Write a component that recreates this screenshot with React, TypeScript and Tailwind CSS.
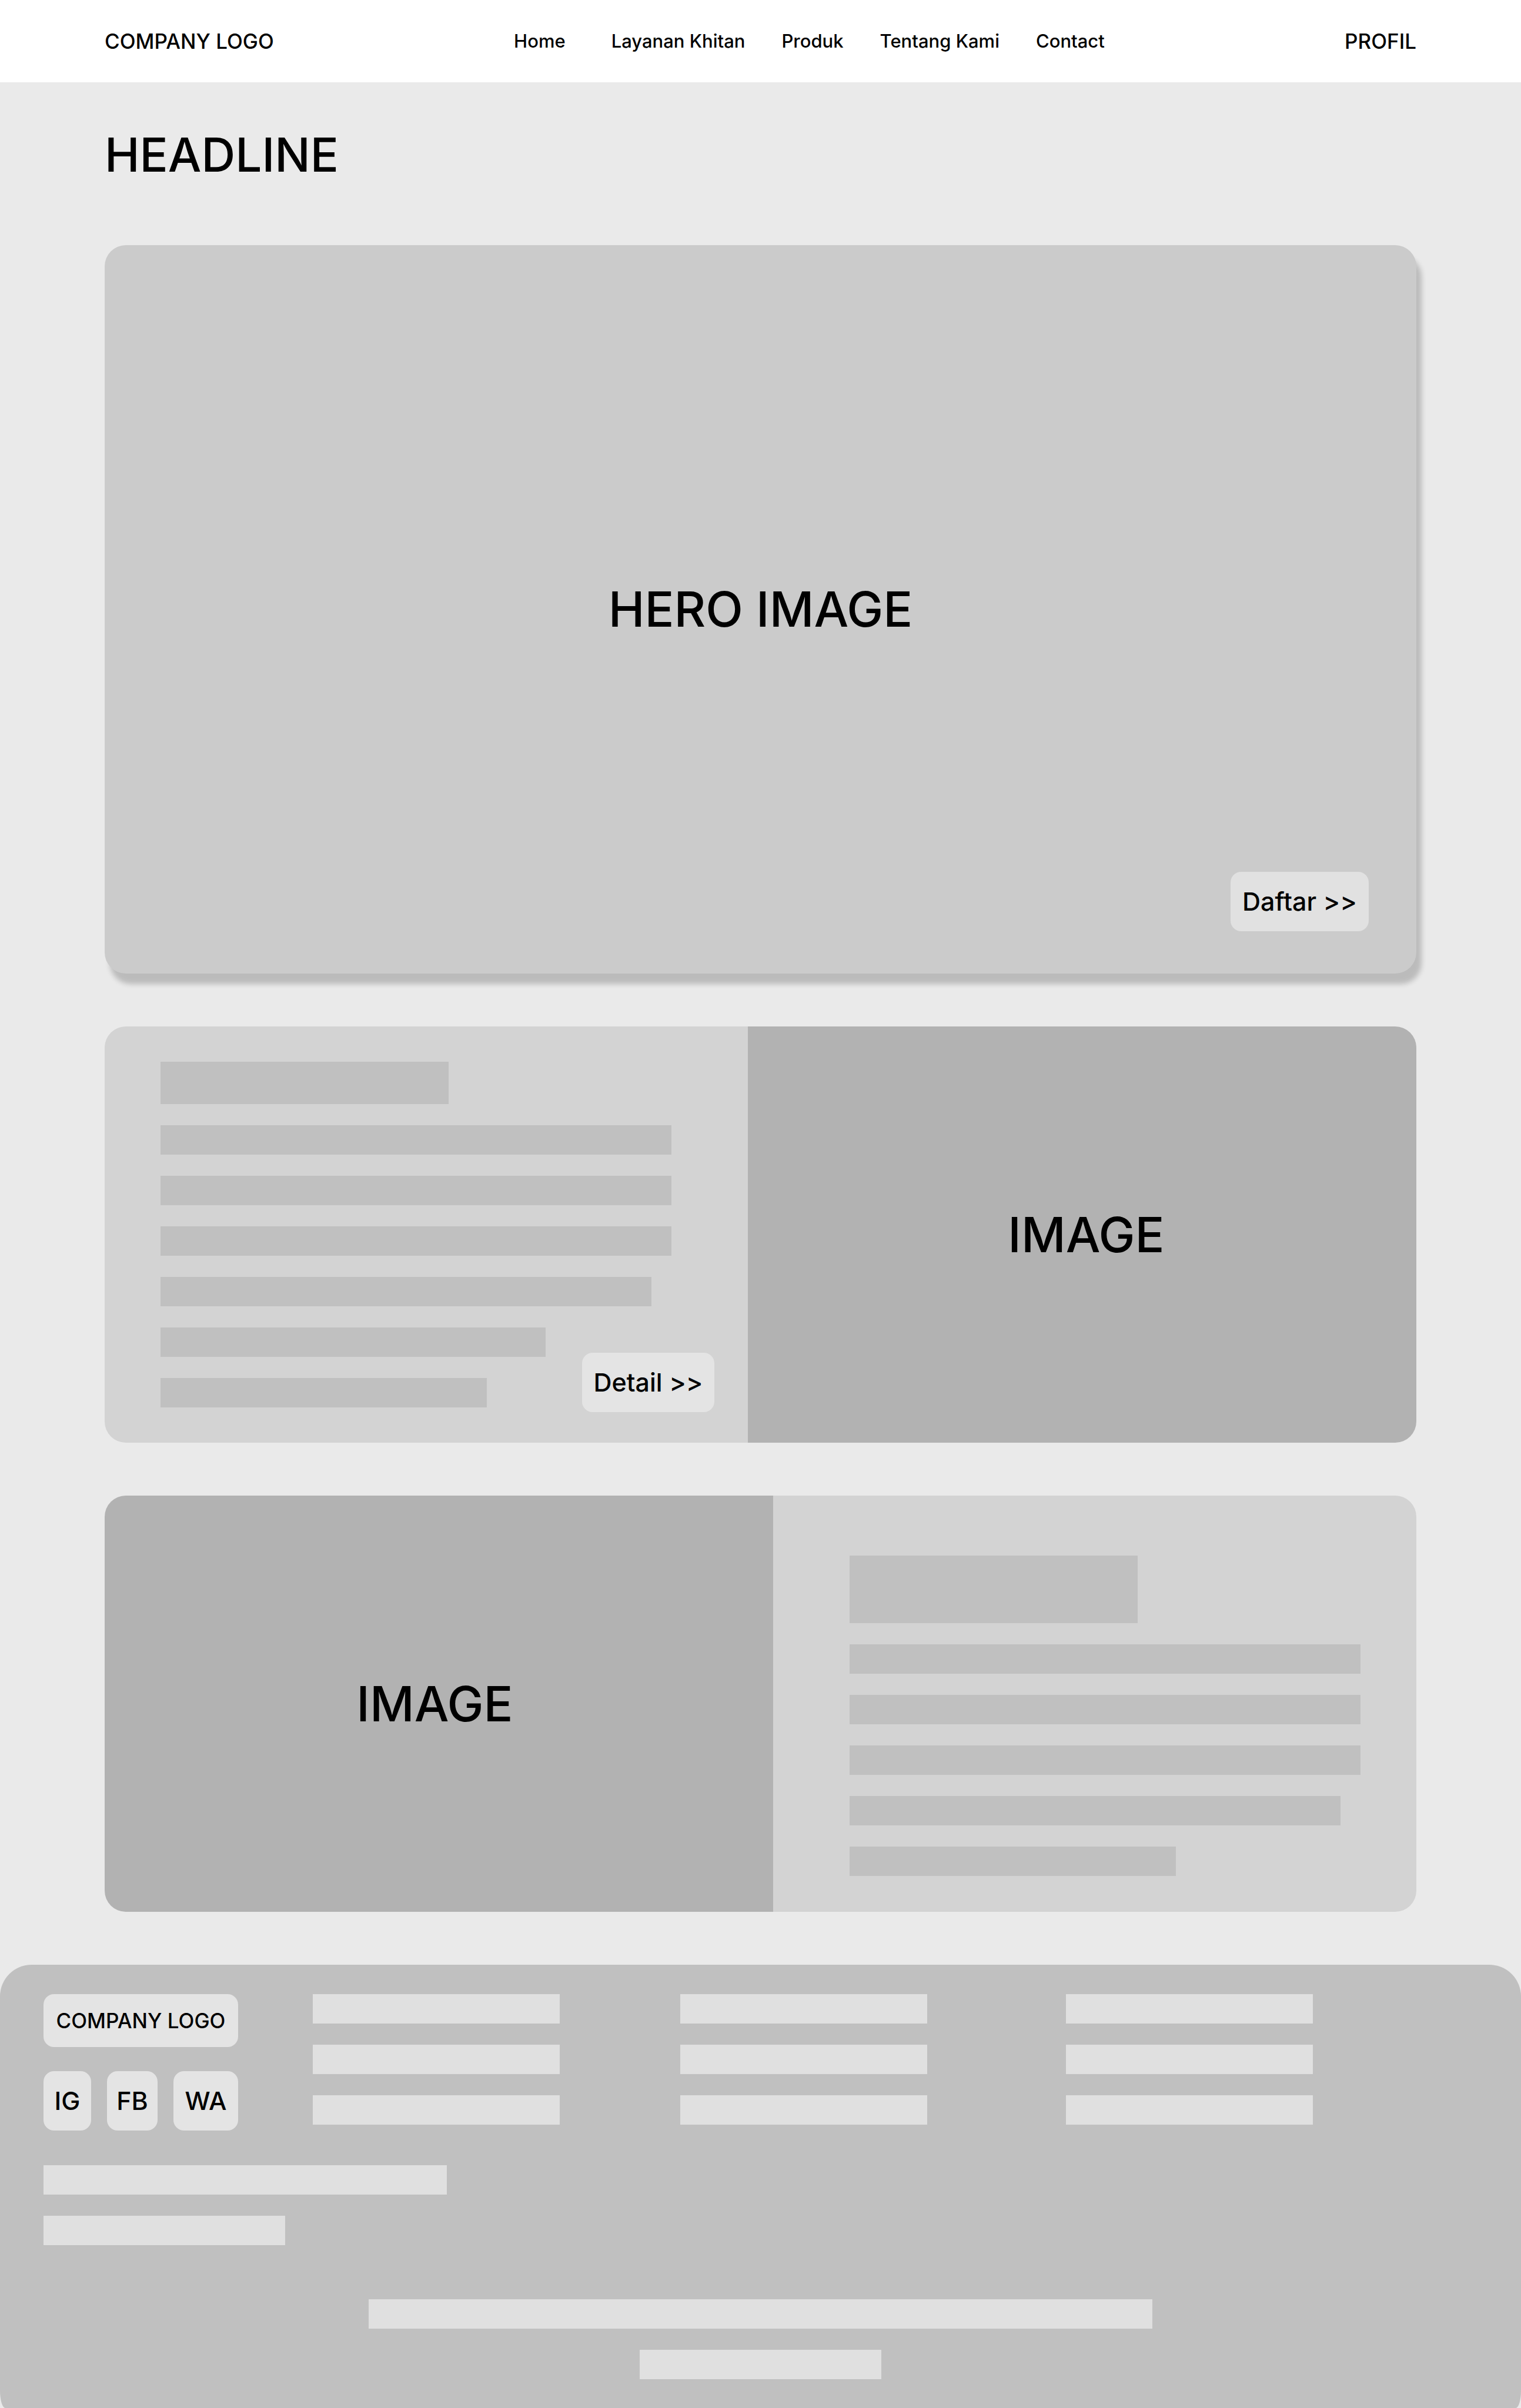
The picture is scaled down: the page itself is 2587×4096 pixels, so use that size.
const navLinks = [
  { label: "Home", className: "pr-4" },
  { label: "Layanan Khitan", className: "" },
  { label: "Produk", className: "" },
  { label: "Tentang Kami", className: "" },
  { label: "Contact", className: "" },
];

const detailLines = [
  "w-[869px]",
  "w-[869px]",
  "w-[869px]",
  "w-[835px]",
  "w-[655px]",
  "w-[555px]",
];

const summaryLines = [
  "w-[869px]",
  "w-[869px]",
  "w-[869px]",
  "w-[835px]",
  "w-[555px]",
];

const socials = ["IG", "FB", "WA"];

function Line({ width }: { width: string }) {
  return <div className={`h-[50px] max-w-full bg-[#c0c0c0] ${width}`} />;
}

function FooterLine({ width }: { width: string }) {
  return <div className={`h-[50px] max-w-full bg-[#e0e0e0] ${width}`} />;
}

function Header() {
  return (
    <header className="flex h-[140px] items-center justify-between bg-white px-[178px]">
      <a href="#" className="text-[35px]">
        COMPANY LOGO
      </a>
      <nav className="flex gap-[62px] text-[31px]">
        {navLinks.map((link) => (
          <a key={link.label} href="#" className={link.className}>
            {link.label}
          </a>
        ))}
      </nav>
      <a href="#" className="text-[35px]">
        PROFIL
      </a>
    </header>
  );
}

function Hero() {
  return (
    <section className="grid h-[1239px] rounded-[36px] bg-[#cbcbcb] shadow-[9px_18px_9px_rgba(0,0,0,0.2)]">
      <p className="col-start-1 row-start-1 place-self-center text-[83px]">HERO IMAGE</p>
      <button
        type="button"
        className="col-start-1 row-start-1 mr-[81px] mb-[72px] h-[101px] w-[235px] self-end justify-self-end rounded-[18px] bg-[#e1e1e1] text-[43px]"
      >
        Daftar &gt;&gt;
      </button>
    </section>
  );
}

function DetailCard() {
  return (
    <section className="grid h-[708px] grid-cols-[1094fr_1137fr] overflow-hidden rounded-[36px]">
      <div className="grid bg-[#d3d3d3]">
        <div className="col-start-1 row-start-1 flex flex-col justify-center gap-[36px] pr-[130px] pl-[95px]">
          <div className="h-[72px] w-[490px] max-w-full bg-[#c0c0c0]" />
          {detailLines.map((width, i) => (
            <Line key={i} width={width} />
          ))}
        </div>
        <button
          type="button"
          className="col-start-1 row-start-1 mr-[57px] mb-[52px] h-[101px] w-[225px] self-end justify-self-end rounded-[18px] bg-[#e4e4e4] text-[43px]"
        >
          Detail &gt;&gt;
        </button>
      </div>
      <div className="flex items-center justify-center bg-[#b2b2b2] pl-[14px] text-[83px]">IMAGE</div>
    </section>
  );
}

function SummaryCard() {
  return (
    <section className="grid h-[708px] grid-cols-[1137fr_1094fr] overflow-hidden rounded-[36px]">
      <div className="flex items-center justify-center bg-[#b2b2b2] pr-[14px] text-[83px]">IMAGE</div>
      <div className="flex flex-col gap-[36px] bg-[#d3d3d3] pt-[102px] pr-[95px] pl-[130px]">
        <div className="h-[115px] w-[490px] max-w-full bg-[#c0c0c0]" />
        {summaryLines.map((width, i) => (
          <Line key={i} width={width} />
        ))}
      </div>
    </section>
  );
}

function Footer() {
  return (
    <footer className="rounded-t-[54px] rounded-br-[9px_30px] rounded-bl-[9px_30px] bg-[#c0c0c0] px-[74px] pt-[50px] pb-[49px]">
      <div className="grid grid-cols-[458fr_625fr_656fr_700fr]">
        <div className="flex w-[331px] flex-col gap-[41px]">
          <a
            href="#"
            className="flex h-[90px] items-center justify-center rounded-[18px] bg-[#e4e4e4] text-[35px]"
          >
            COMPANY LOGO
          </a>
          <div className="grid grid-cols-[81fr_86fr_110fr] gap-[27px]">
            {socials.map((name) => (
              <a
                key={name}
                href="#"
                className="flex h-[101px] items-center justify-center rounded-[18px] bg-[#e4e4e4] text-[43px]"
              >
                {name}
              </a>
            ))}
          </div>
        </div>
        {[0, 1, 2].map((column) => (
          <div key={column} className="flex flex-col gap-[36px]">
            <FooterLine width="w-[420px]" />
            <FooterLine width="w-[420px]" />
            <FooterLine width="w-[420px]" />
          </div>
        ))}
      </div>
      <div className="mt-[59px] flex flex-col gap-[36px]">
        <FooterLine width="w-[686px]" />
        <FooterLine width="w-[411px]" />
      </div>
      <div className="mt-[92px] flex flex-col items-center gap-[36px]">
        <FooterLine width="w-[1333px]" />
        <FooterLine width="w-[411px]" />
      </div>
    </footer>
  );
}

export default function App() {
  return (
    <div className="min-h-screen bg-[#eaeaea] font-['Inter',sans-serif] font-medium text-black">
      <Header />
      <main className="flex flex-col gap-[90px] px-[178px] pt-[59px] pb-[90px]">
        <h1 className="text-[80px] leading-[128px]">HEADLINE</h1>
        <Hero />
        <DetailCard />
        <SummaryCard />
      </main>
      <Footer />
    </div>
  );
}
